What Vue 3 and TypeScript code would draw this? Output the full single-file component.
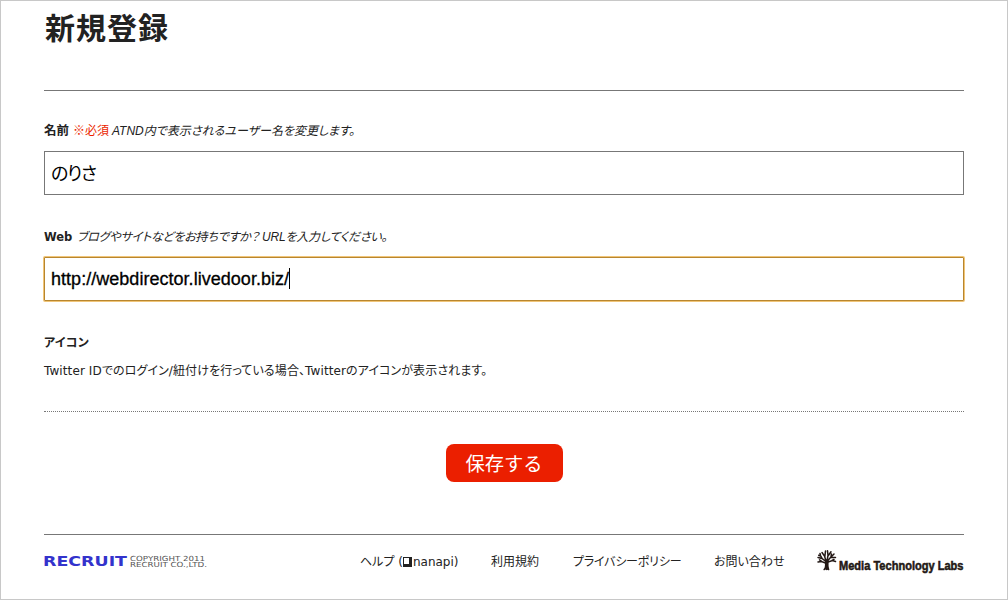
<script setup lang="ts">
import { ref } from 'vue'

const name = ref('のりさ')
const url = ref('http://webdirector.livedoor.biz/')
</script>

<template>
    <div class="page">
        <h1 class="title">新規登録</h1>

        <form class="form" @submit.prevent>
            <div class="field">
                <label class="label" for="name">
                    <b class="label-name">名前</b>
                    <span class="required">※必須</span>
                    <i class="hint hint-name">ATND内で表示されるユーザー名を変更します。</i>
                </label>
                <input id="name" v-model="name" class="input input-name" type="text" />
            </div>

            <div class="field">
                <label class="label" for="url">
                    <b class="label-web">Web</b>
                    <i class="hint hint-web">ブログやサイトなどをお持ちですか？ URLを入力してください。</i>
                </label>
                <div class="focused">
                    <input id="url" v-model="url" class="input input-url" type="text" spellcheck="false" />
                    <span class="caret"></span>
                </div>
            </div>

            <div class="icon-field">
                <b class="label-icon">アイコン</b>
                <p class="note">Twitter IDでのログイン/紐付けを行っている場合、Twitterのアイコンが表示されます。</p>
            </div>

            <div class="actions">
                <button class="save" type="submit">保存する</button>
            </div>
        </form>

        <footer class="footer">
            <svg class="recruit" width="170" height="20" viewBox="0 0 170 20">
                <text class="recruit-name" x="-1" y="14" textLength="84" lengthAdjust="spacingAndGlyphs">RECRUIT</text>
                <text class="recruit-copy" x="86" y="9" textLength="75" lengthAdjust="spacingAndGlyphs">COPYRIGHT 2011</text>
                <text class="recruit-copy" x="86" y="15" textLength="77" lengthAdjust="spacingAndGlyphs">RECRUIT CO.,LTD.</text>
            </svg>
            <nav class="links">
                <a class="link link-help">ヘルプ (<span class="box"></span>nanapi)</a>
                <a class="link link-terms">利用規約</a>
                <a class="link link-privacy">プライバシーポリシー</a>
                <a class="link link-contact">お問い合わせ</a>
            </nav>
            <svg class="mtl" width="147" height="26" viewBox="0 0 147 26">
                <g fill="none" stroke="#231815" stroke-linecap="round">
                    <path d="M7.2 19.5Q9 18.5 8.7 12M11.6 19.5Q10 17 10.5 12" stroke-width="1.6" />
                    <path d="M9.7 18.5V11" stroke-width="3.4" />
                    <path d="M9.5 12L5 8.5L1 7.5M5.5 9L3.5 5.5L3 3.5M9 11L7.5 6L5 2.5M7.8 7L8.5 1M10 11L11 5.5L10.5 .8M11 6L14 1.8M10.5 11L13.5 7.5L17 4M13.5 7.5L18.5 7.5M11 12L15.5 10.5L18.5 11.5M8.5 13L4.5 11.5L1 12M5 11.5L2.5 9.8M15 10.5L17 9.5M4 6.2L1.7 5.3M14 6.8L14.4 4" stroke-width="1.5" />
                </g>
                <text class="mtl-name" x="22" y="19.5" textLength="124.5" lengthAdjust="spacingAndGlyphs">Media Technology Labs</text>
            </svg>
        </footer>
    </div>
</template>

<style>
body {
    margin: 0;
    background: #fff;
}
</style>

<style scoped>
.page {
    box-sizing: border-box;
    width: 1008px;
    height: 600px;
    padding: 0 43px;
    border: 1px solid #c8c8c8;
    overflow: hidden;
    color: #222;
    font-family: "Liberation Sans", "Noto Sans CJK JP", sans-serif;
    font-size: 12px;
}

.title {
    height: 89px;
    margin: 0;
    padding: 8px 0 0 1px;
    box-sizing: border-box;
    font-size: 30px;
    line-height: 40px;
    letter-spacing: 1px;
    font-weight: bold;
}

.form {
    height: 443px;
    border-top: 1px solid #777;
    border-bottom: 1px solid #777;
}

.field {
    height: 106px;
}

.field:first-child {
    padding-top: 30px;
}

.label {
    display: flex;
    align-items: center;
    height: 17px;
    margin-bottom: 13px;
    white-space: nowrap;
    font-feature-settings: "palt";
}

.label-name {
    width: 29px;
    font-size: 12.5px;
}

.required {
    width: 39px;
    color: #eb1f00;
}

.label-web {
    width: 33px;
    padding-top: 2px;
    font-family: "DejaVu Sans", sans-serif;
    font-size: 11.5px;
}

.hint-web {
    letter-spacing: -0.22px;
}

.input {
    display: block;
    box-sizing: border-box;
    width: 920px;
    height: 44px;
    padding: 0 6px;
    border: 1px solid #777;
    outline: none;
    background: #fff;
    color: #000;
    font-family: "Liberation Sans", "Noto Sans CJK JP", sans-serif;
    font-size: 18px;
}

.input-name {
    padding-bottom: 3px;
    font-feature-settings: "palt";
    letter-spacing: -1.2px;
}

.focused {
    position: relative;
}

.input-url {
    border-color: #b8862f;
    border-radius: 1px;
    box-shadow: 0 0 0 1px #f0c578;
    letter-spacing: 0.03px;
    -webkit-text-stroke: 0.3px #000;
}

.caret {
    position: absolute;
    top: 11px;
    left: 245px;
    width: 1px;
    height: 21px;
    background: #000;
}

.icon-field {
    height: 78px;
    border-bottom: 1px dotted #777;
    font-feature-settings: "palt";
}

.label-icon {
    display: block;
    height: 20px;
    line-height: 20px;
    letter-spacing: 0.2px;
}

.note {
    margin: 8px 0 0;
    font-family: "DejaVu Sans", "Noto Sans CJK JP", sans-serif;
    line-height: 20px;
    letter-spacing: 0.1px;
    white-space: nowrap;
}

.actions {
    display: flex;
    justify-content: center;
    padding-top: 32px;
}

.save {
    width: 117px;
    height: 38px;
    padding: 0;
    border: 0;
    border-radius: 8px;
    background: #eb1f00;
    color: #fff;
    font-family: "Noto Sans CJK JP", sans-serif;
    font-size: 19.3px;
    line-height: 38px;
}

.footer {
    display: flex;
    align-items: flex-start;
    padding-top: 17px;
}

.recruit {
    width: 170px;
    overflow: visible;
}

.recruit-name {
    fill: #3333cc;
    font: bold 13.5px "DejaVu Sans", sans-serif;
}

.recruit-copy {
    fill: #555;
    font: 7px "DejaVu Sans", sans-serif;
}

.links {
    display: flex;
    flex: 1;
    padding-left: 146px;
}

.link {
    line-height: 20px;
    white-space: nowrap;
    font-feature-settings: "palt";
}

.link-help {
    width: 131px;
    font-family: "DejaVu Sans", "Noto Sans CJK JP", sans-serif;
}

.link-terms {
    width: 82px;
}

.link-privacy {
    width: 141px;
    letter-spacing: -0.2px;
}

.box {
    display: inline-block;
    width: 5px;
    height: 6px;
    margin: 0 1px 0 0;
    border: solid #222;
    border-width: 1px 3px 3px 1px;
    vertical-align: -1px;
}

.mtl {
    margin-top: -2px;
    overflow: visible;
}

.mtl-name {
    fill: #231815;
    stroke: #231815;
    stroke-width: 0.5px;
    font: bold 12px "Liberation Sans", sans-serif;
}
</style>
